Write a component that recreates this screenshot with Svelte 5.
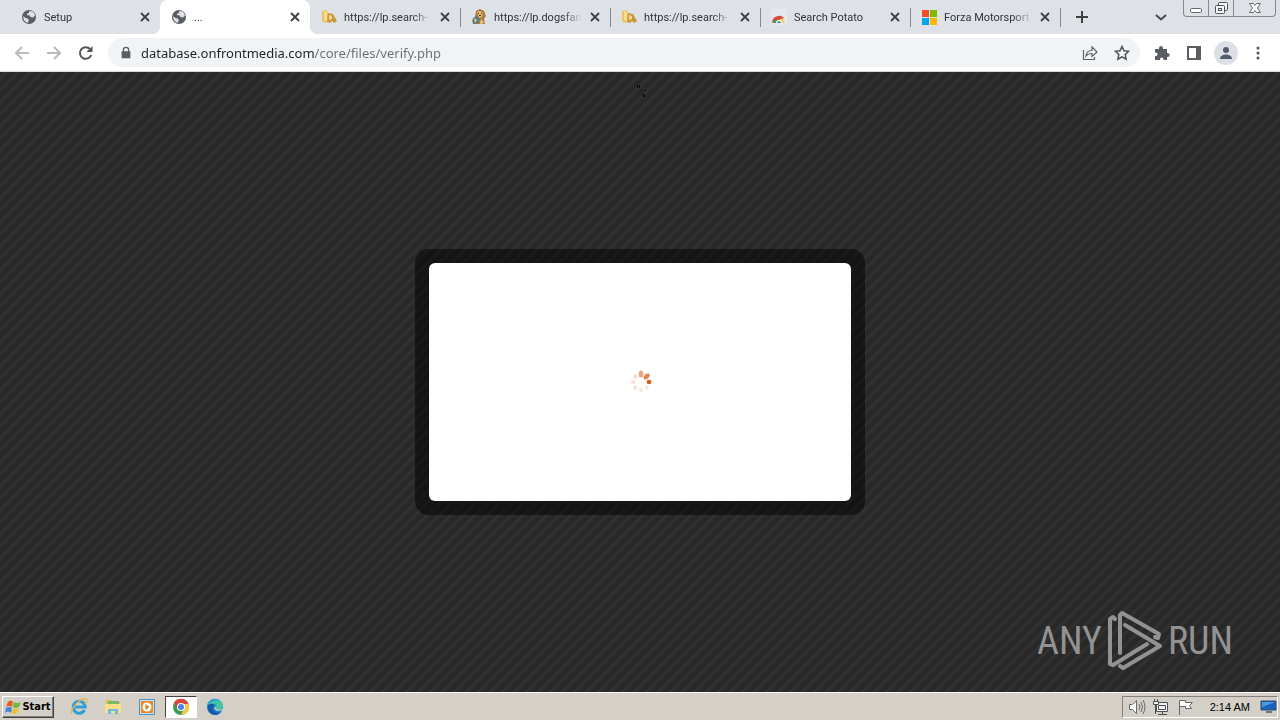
<script lang="ts">
	type Tab = { title: string; icon: string; active?: boolean };

	const tabs: Tab[] = [
		{ title: 'Setup', icon: 'globe' },
		{ title: '...', icon: 'globe', active: true },
		{ title: 'https://lp.search-', icon: 'maps' },
		{ title: 'https://lp.dogsfan', icon: 'dog' },
		{ title: 'https://lp.search-', icon: 'maps' },
		{ title: 'Search Potato', icon: 'store' },
		{ title: 'Forza Motorsport', icon: 'microsoft' }
	];

	let url = $state('database.onfrontmedia.com/core/files/verify.php');

	// spinner petals, clockwise from the top
	const petals = [0.55, 0.75, 1, 0.12, 0.14, 0.16, 0.18, 0.22];
</script>

{#snippet favicon(name: string)}
	<svg class="favicon" viewBox="0 0 16 16" aria-hidden="true">
		{#if name === 'globe'}
			<circle cx="8" cy="8" r="7" fill="#5a5e63" />
			<path d="M2.3 7.2 5 9.2l2 .3.8 1.8-1 2.5C4 13.300 2 10.500 2.300 7.200zM8 2.300l3-.1c1.600.8 2.700 2.300 3 4.300L12 8.500 9.500 8 8.300 6.300 6 6.200l.2-1.800 1.800-.5z" fill="#dee1e6" />
		{:else if name === 'maps'}
			<path d="M1 2 5 1l2 2v10l-3 1-3-2z" fill="#e8c365" />
			<path d="m3 2 3 1v9l-3-1z" fill="#f6dc8c" />
			<path d="m7 4 5 1 4 7-3 2-2-2-2 2-3-1z" fill="#c8983d" />
			<path d="m8 6 3 1v3l-3 1z" fill="#f4d88b" />
		{:else if name === 'dog'}
			<path d="m5 2 4-2 4 2 2 5-2 3 1 5H2L1 11l3-3z" fill="#a77b42" />
			<path d="m6 3 3-1 3 2-1 4-3 1z" fill="#e9bc66" />
			<path d="m2 9 4-2 3 3-2 4-5 1z" fill="#52788c" />
			<path d="m3 9 3 2-2 3zM10 10l3 4-4 1z" fill="#efcf83" />
			<path d="M7 4h1v1H7zM10 4h1v1h-1zM8 6h2v1H8z" fill="#38291e" />
		{:else if name === 'store'}
			<path d="M0 0h16v16H0z" fill="#e5e8ec" />
			<path d="M1 14a7 7 0 0 1 12-5l-5 2z" fill="#dc493a" />
			<path d="M2 14a6 6 0 0 1 3-4l3 4z" fill="#36a15d" />
			<path d="M9 10h4l1 4H9z" fill="#f2d45c" />
			<path d="M5 14a3 3 0 0 1 6 0z" fill="#fff" />
			<path d="M6 14a2 2 0 0 1 4 0z" fill="#5687d5" />
		{:else}
			<path d="M1 1h7v7H1z" fill="#f25022" />
			<path d="M9 1h7v7H9z" fill="#7fba00" />
			<path d="M1 9h7v7H1z" fill="#00a4ef" />
			<path d="M9 9h7v7H9z" fill="#ffb900" />
		{/if}
	</svg>
{/snippet}

<div class="screen">
	<header>
		<div class="tabstrip">
			<div class="tabs" role="tablist">
				{#each tabs as tab}
					<div class="tab" class:active={tab.active}>
						<button class="tab-main" role="tab" aria-selected={!!tab.active}>
							{@render favicon(tab.icon)}
							<span class="title">{tab.title}</span>
						</button>
						<button class="close" aria-label="Close tab">
							<svg width="10" height="10" viewBox="0 0 10 10"><path d="m1 1 8 8M9 1 1 9" stroke="#3c4043" stroke-width="1.800" /></svg>
						</button>
					</div>
				{/each}
				<button class="new-tab" aria-label="New tab">
					<svg width="14" height="14" viewBox="0 0 14 14"><path d="M7 1v12M1 7h12" stroke="#3c4043" stroke-width="2" /></svg>
				</button>
			</div>
			<button class="search-tabs" aria-label="Search tabs">
				<svg width="12" height="12" viewBox="0 0 12 12"><path d="m1 4 5 4.500L11 4" fill="none" stroke="#45484d" stroke-width="2" /></svg>
			</button>
			<div class="window-buttons">
				<button aria-label="Minimize">
					<svg width="16" height="16" viewBox="0 0 16 16"><rect x="2.500" y="8.500" width="11" height="4" rx="1" fill="#fff" stroke="#65686d" /></svg>
				</button>
				<button aria-label="Restore">
					<svg width="16" height="16" viewBox="0 0 16 16" fill="#f5f5f5" stroke="#50545a"><rect x="5.500" y="2.500" width="9" height="8" rx="1" /><rect x="2.500" y="5.500" width="9" height="8" rx="1" /><rect x="5.500" y="8.500" width="3" height="2" /></svg>
				</button>
				<button class="quit" aria-label="Close">
					<svg width="16" height="16" viewBox="0 0 16 16"><path d="M2.500 3.500h4L8 5.500l1.500-2h4L10.500 8l3 4.500h-4L8 10.500l-1.500 2h-4L5.500 8z" fill="#fff" stroke="#65686d" /></svg>
				</button>
			</div>
		</div>

		<div class="toolbar">
			<button aria-label="Back" disabled>
				<svg viewBox="0 0 16 16"><path d="M15 8H2M8 2 2 8l6 6" fill="none" stroke="#b8babd" stroke-width="2" /></svg>
			</button>
			<button aria-label="Forward" disabled>
				<svg viewBox="0 0 16 16"><path d="M1 8h13M8 2l6 6-6 6" fill="none" stroke="#b8babd" stroke-width="2" /></svg>
			</button>
			<button aria-label="Reload">
				<svg viewBox="0 0 16 16"><path d="M13.200 10A5.800 5.800 0 1 1 12 4" fill="none" stroke="#505357" stroke-width="2" /><path d="M14.500 1v6h-6z" fill="#505357" /></svg>
			</button>
			<div class="omnibox">
				<button class="lock" aria-label="Site information">
					<svg viewBox="0 0 16 16"><path d="M3 6h10v8H3z" fill="#5a5d61" /><path d="M5 7V4.500a3 3 0 0 1 6 0V7" fill="none" stroke="#5a5d61" stroke-width="1.500" /></svg>
				</button>
				<input type="text" aria-label="Address" spellcheck="false" bind:value={url} />
				<button aria-label="Share">
					<svg viewBox="0 0 16 16" fill="none" stroke="#5f6368" stroke-width="1.200"><path d="M1.500 5v9.500h11V12" /><path d="M4 11c.5-4 3-5.500 6-5.500V2l5 5-5 4.500V8.500c-3 0-4.500.5-6 2.500z" /></svg>
				</button>
				<button aria-label="Bookmark this page">
					<svg viewBox="0 0 16 16"><path d="m8 1.500 2 4.300 4.600.5-3.400 3.200.9 4.700L8 11.900l-4.100 2.300.9-4.700-3.400-3.200 4.600-.5z" fill="none" stroke="#505357" stroke-width="1.500" /></svg>
				</button>
			</div>
			<button aria-label="Extensions">
				<svg viewBox="0 0 16 16"><path d="M1 4h4c-.5-4 4.500-4 4 0h4v4c3.500-.5 3.500 4.500 0 4v3H9.500c.5-3.500-4-3.500-3.500 0H1v-4c3.500.5 3.500-4 0-3.500z" fill="#5a5d61" /></svg>
			</button>
			<button aria-label="Side panel">
				<svg viewBox="0 0 16 16"><path d="M2 2h12v12H2z" fill="none" stroke="#5a5d61" stroke-width="2" /><path d="M10 2h4v12h-4z" fill="#5a5d61" /></svg>
			</button>
			<button class="profile" aria-label="Profile">
				<svg viewBox="0 0 16 16" fill="#505c72"><circle cx="8" cy="5" r="3" /><path d="M2 14c0-6 12-6 12 0z" /></svg>
			</button>
			<button aria-label="Menu">
				<svg viewBox="0 0 16 16" fill="#505357"><circle cx="8" cy="3" r="1.500" /><circle cx="8" cy="8" r="1.500" /><circle cx="8" cy="13" r="1.500" /></svg>
			</button>
		</div>
	</header>

	<main>
		<svg class="specks" width="12" height="16" viewBox="0 0 12 16" fill="#080808"><path d="M1 1h1v3H1zM3 1h1v3H3zM6 10h2v1h1v2H7v-2H6zM5 6h1v1H5zM9 6h1v1H9z" /></svg>
		<div class="frame">
			<div class="box">
				<svg width="24" height="24" viewBox="-12 -12 24 24" role="img" aria-label="Loading">
					{#each petals as opacity, i}
						<ellipse cx="0" cy="-8" rx={i < 3 ? 2.3 : 1.9} ry={i < 2 ? 3.6 : 2.4} transform="translate(1 0) rotate({i * 45})" fill="#dc5a1e" {opacity} />
					{/each}
				</svg>
			</div>
		</div>
		<div class="watermark">
			<span>ANY</span>
			<svg width="56" height="62" viewBox="0 0 56 62" fill="none" stroke="#929292" stroke-width="4" stroke-linejoin="round" stroke-linecap="round">
				<path d="M8 9 6 7 3 9v45l3 1 34-21" />
				<path d="M13 43V5l2-2 37 21-1 4-3-1" />
				<path d="m18 15 35 21L16 58l-3-2" />
			</svg>
			<span>RUN</span>
		</div>
	</main>

	<footer>
		<button class="start">
			<svg width="16" height="16" viewBox="0 0 16 16"><path d="M3 3q3-3 5 0L7 8Q4 6 1 8z" fill="#e85b25" /><path d="M9 3q3 2 7 0l-2 5q-3 2-6 0z" fill="#70b83a" /><path d="M1 9q3-2 6 0l-1 5q-3-3-6 0z" fill="#3f87d8" /><path d="M8 9q3 2 6 0l-2 5q-3 2-5 0z" fill="#f5bd25" /></svg>
			Start
		</button>
		<nav>
			<button aria-label="Internet Explorer">
				<svg viewBox="0 0 18 18"><path d="M14.500 12a6 6 0 1 1 .7-3H5" fill="none" stroke="#2e9fdb" stroke-width="3" /><path d="M2 16c-4-2 8-17 14-15 2 1 0 4-1 5" fill="none" stroke="#e4b74b" stroke-width="1.300" /></svg>
			</button>
			<button aria-label="Explorer">
				<svg viewBox="0 0 18 18"><path d="M2 2h6l1 2h7v10H2z" fill="#e5bd50" /><path d="M4 3h11v5H4z" fill="#79b96b" /><path d="M1 6h16v9H1z" fill="#f9df88" /><path d="M4 16v-5h10v5h-3v-3H7v3z" fill="#70b8df" /></svg>
			</button>
			<button aria-label="Media Player">
				<svg viewBox="0 0 18 18"><path d="M1.500 1.500h15v15h-15z" fill="#c5e3f8" stroke="#4893cf" /><path d="M3 3h12v12H3z" fill="#f18a1b" /><circle cx="9" cy="9" r="4.500" fill="#fff" /><path d="m7.500 6 4 3-4 3z" fill="#e8780f" /></svg>
			</button>
			<button class="pressed" aria-label="Chrome">
				<svg viewBox="0 0 18 18"><circle cx="9" cy="9" r="8" fill="#3b9b50" /><path d="M2 5a8 8 0 0 1 14 0l.7 2H9L5.500 11z" fill="#db4639" /><path d="M9 6h7.500A8 8 0 0 1 9 17l3-6z" fill="#f7ca45" /><circle cx="9" cy="9" r="4" fill="#fff" /><circle cx="9" cy="9" r="3" fill="#4285f4" /></svg>
			</button>
			<button aria-label="Edge">
				<svg viewBox="0 0 18 18"><circle cx="9" cy="9" r="8" fill="#1686ce" /><path d="M1 8C2-1 16-1 17 8c0 4-6 5-7 2 2-4-4-6-9-2z" fill="#43c4a2" /><path d="M1 8C3 0 11-1 14 3c-5-2-9 0-13 5z" fill="#259fd5" /><path d="M2 7c5-3 8 0 5 3-1 3 4 6 8 4-5 6-15 2-13-7z" fill="#155ca8" /><path d="M9 8c-2 4 2 6 8 4l1-2c-3 2-7 2-8 0z" fill="#d4d0c8" /></svg>
			</button>
		</nav>
		<div class="tray">
			<svg viewBox="0 0 18 18" fill="none" stroke="#686868"><path d="M1.500 6.500h3l4-4v13l-4-4h-3z" fill="#fff" /><path d="M11 6q2 3 0 6M13 4q3 5 0 10M15 2q4 7 0 14" /></svg>
			<svg viewBox="0 0 18 18" fill="#eee" stroke="#505050"><path d="M4.500 4.500h11v9h-11zM6.500 7.500h7v4h-7zM6 16.500h9M10.500 14v2" /><path d="M1.500 3.500h5v3h-5zM2.500 1v2M5.500 1v2M3.500 7v9" /></svg>
			<svg viewBox="0 0 18 18" fill="#fff" stroke="#686868"><path d="M3.500 17V2.500h6v2h7l-3 3 2 3h-6v-2h-6" /></svg>
			<time>2:14 AM</time>
			<svg viewBox="0 0 18 18"><path d="M2 3h15v9H2z" fill="#1863bd" stroke="#344b68" /><path d="M3 4h13L3 9z" fill="#4b99df" /><path d="M7 13h6v2H7z" fill="#6d7987" /></svg>
		</div>
	</footer>
</div>

<style>
	:global(body) {
		margin: 0;
	}

	.screen {
		display: flex;
		flex-direction: column;
		min-height: 100vh;
		font-family: Roboto, 'Noto Sans', sans-serif;
		font-size: 11px;
		color: #303338;
	}

	button {
		display: flex;
		align-items: center;
		justify-content: center;
		flex: none;
		padding: 0;
		border: 0;
		background: none;
		font: inherit;
		color: inherit;
	}

	svg {
		display: block;
		flex: none;
	}

	.tabstrip {
		display: flex;
		height: 34px;
		background: #dee1e6;
	}

	.tabs {
		display: flex;
		flex: 1;
		min-width: 0;
		padding-left: 10px;
	}

	.tab {
		position: relative;
		display: flex;
		align-items: center;
		flex: 0 1 150px;
		min-width: 0;
		box-sizing: border-box;
		padding: 0 8px 0 11px;
	}

	.tab:not(.active)::after {
		content: '';
		position: absolute;
		right: -1px;
		top: 8px;
		width: 1px;
		height: 19px;
		background: #85888e;
	}

	.tab:first-child::after {
		display: none;
	}

	.tab.active {
		background: #fff;
		border-radius: 8px 8px 0 0;
	}

	/* curved feet of the selected tab */
	.tab.active::before,
	.tab.active::after {
		content: '';
		position: absolute;
		bottom: 0;
		width: 8px;
		height: 8px;
	}

	.tab.active::before {
		left: -8px;
		background: radial-gradient(circle at 0 0, transparent 8px, #fff 8px);
	}

	.tab.active::after {
		right: -8px;
		background: radial-gradient(circle at 100% 0, transparent 8px, #fff 8px);
	}

	.tab-main {
		flex: 1;
		gap: 7px;
		min-width: 0;
		height: 100%;
	}

	.favicon {
		width: 16px;
		height: 16px;
	}

	.title {
		flex: 1;
		overflow: hidden;
		text-align: left;
		white-space: nowrap;
		mask-image: linear-gradient(to right, #000 78%, transparent);
	}

	.close {
		width: 14px;
		height: 16px;
		margin-left: 6px;
	}

	.new-tab {
		width: 24px;
		margin-left: 10px;
	}

	.search-tabs {
		width: 24px;
		margin-right: 10px;
	}

	.window-buttons {
		display: flex;
		height: 17px;
		box-sizing: border-box;
		margin-right: 4px;
		border: 1px solid #85888e;
		border-top: 0;
		border-radius: 0 0 4px 4px;
	}

	.window-buttons button {
		width: 25px;
		border-right: 1px solid #85888e;
	}

	.window-buttons .quit {
		width: 41px;
		border: 0;
	}

	.toolbar {
		display: flex;
		align-items: center;
		height: 37px;
		padding: 0 6px;
		background: #fff;
		border-bottom: 1px solid #d8dadd;
	}

	.toolbar button {
		width: 32px;
		height: 28px;
	}

	.toolbar svg {
		width: 16px;
		height: 16px;
	}

	.omnibox {
		display: flex;
		align-items: center;
		flex: 1;
		height: 29px;
		margin: 0 6px;
		box-sizing: border-box;
		padding-right: 2px;
		border-radius: 15px;
		background: #f1f3f4;
	}

	.toolbar .lock {
		width: 33px;
		padding-left: 2px;
	}

	.lock svg {
		width: 14px;
		height: 14px;
	}

	/* host in dark, path in grey */
	input {
		flex: 1;
		min-width: 0;
		padding: 0;
		border: 0;
		outline: 0;
		background: linear-gradient(to right, #202124 173px, #6a6e73 173px);
		background-clip: text;
		font: 13px 'Noto Sans', 'Open Sans', sans-serif;
		color: transparent;
		caret-color: #202124;
	}

	.toolbar .profile {
		width: 24px;
		height: 24px;
		margin: 0 4px;
		border-radius: 50%;
		background: #dce0e6;
	}

	main {
		position: relative;
		display: flex;
		align-items: center;
		justify-content: center;
		flex: 1;
		background: linear-gradient(135deg, #282828 0 12%, #2e2e2e 20%, #353535 27%, #2b2b2b 36%, #282828 50% 62%, #2e2e2e 70%, #353535 77%, #2b2b2b 86%, #282828) 0 0 / 12px 12px;
	}

	.frame {
		width: 422px;
		padding: 14px;
		border-radius: 14px;
		background: rgb(0 0 0 / 50%);
	}

	.box {
		display: flex;
		align-items: center;
		justify-content: center;
		height: 238px;
		border-radius: 6px;
		background: #fff;
	}

	.specks {
		position: absolute;
		left: 50%;
		top: 12px;
		margin-left: -4px;
	}

	.watermark {
		position: absolute;
		right: 47px;
		bottom: 20px;
		display: flex;
		align-items: center;
		gap: 5px;
		font: 38px 'Liberation Sans Narrow', 'Roboto Condensed', 'Liberation Sans', sans-serif;
		color: #929292;
	}

	footer {
		display: flex;
		align-items: center;
		height: 27px;
		padding: 0 2px;
		border-top: 1px solid #fff;
		background: #d4d0c8;
	}

	.start {
		gap: 1px;
		width: 52px;
		height: 22px;
		box-sizing: border-box;
		border: 1px solid;
		border-color: #fff #404040 #404040 #fff;
		box-shadow: inset -1px -1px #85817a;
		font: bold 11px 'DejaVu Sans Condensed', 'DejaVu Sans', sans-serif;
		color: #000;
	}

	nav {
		display: flex;
		flex: 1;
		gap: 2px;
		margin-left: 9px;
	}

	nav button {
		width: 32px;
		height: 22px;
		box-sizing: border-box;
	}

	nav svg {
		width: 18px;
		height: 18px;
	}

	nav .pressed {
		border: 1px solid;
		border-color: #404040 #fff #fff #404040;
		background: #fff;
	}

	.tray {
		display: flex;
		align-items: center;
		gap: 6px;
		height: 22px;
		box-sizing: border-box;
		padding: 0 0 0 5px;
		border: 1px solid;
		border-color: #85817a #fff #fff #85817a;
		color: #000;
	}

	.tray svg {
		width: 18px;
		height: 18px;
	}

	time {
		margin: 0 3px 0 10px;
		font: 11px 'Liberation Sans', sans-serif;
	}
</style>
